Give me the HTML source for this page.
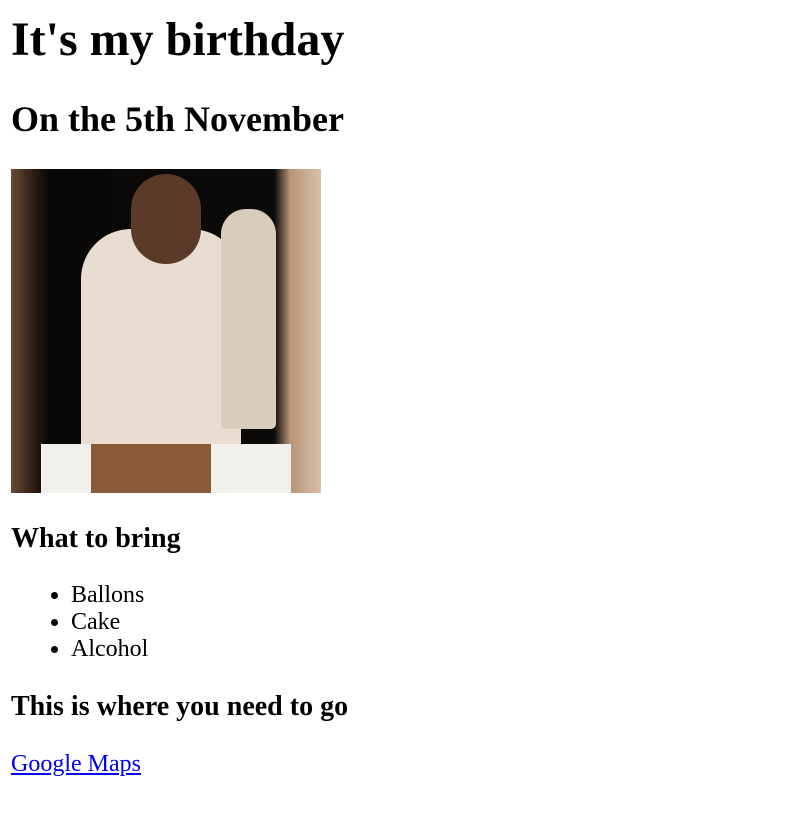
<!DOCTYPE html>
<html><head><meta charset="utf-8"><style>
html,body{margin:0;padding:0;background:#fff;width:791px;height:822px;overflow:hidden}
body{font-family:"Liberation Serif",serif;color:#000;position:relative}
.a{position:absolute;left:11px;margin:0;line-height:normal;white-space:nowrap}
h1.a{font-size:48px;top:12px}
h2.a{font-size:36px;top:98px}
h3.a{font-size:28px}
ul.a{font-size:24px;top:582px;padding-left:60px;left:11px;}
ul.a li{line-height:27px}
a{color:#0000ee;text-decoration:underline}
.img{position:absolute;left:11px;top:169px;width:310px;height:324px;overflow:hidden;
background:linear-gradient(90deg,#6a4a38 0,#2a1a12 8%,#0a0806 12%,#0c0a08 85%,#b89478 90%,#d8c0a8 100%)}
</style></head><body>
<h1 class="a">It's my birthday</h1>
<h2 class="a">On the 5th November</h2>
<div class="img">
<div style="position:absolute;left:70px;top:60px;width:160px;height:230px;background:#e8ddd0;border-radius:50px 50px 10px 10px"></div>
<div style="position:absolute;left:120px;top:5px;width:70px;height:90px;background:#5a3a28;border-radius:35px"></div>
<div style="position:absolute;left:210px;top:40px;width:55px;height:220px;background:#d8ccbc;border-radius:25px 25px 5px 5px"></div>
<div style="position:absolute;left:30px;top:275px;width:250px;height:49px;background:#f2f0ec"></div>
<div style="position:absolute;left:80px;top:275px;width:120px;height:49px;background:#8a5a38"></div>
</div>
<h3 class="a" style="top:523px">What to bring</h3>
<ul class="a"><li>Ballons</li><li>Cake</li><li>Alcohol</li></ul>
<h3 class="a" style="top:691px">This is where you need to go</h3>
<p class="a" style="font-size:24px;top:751px"><a>Google Maps</a></p>
</body></html>
